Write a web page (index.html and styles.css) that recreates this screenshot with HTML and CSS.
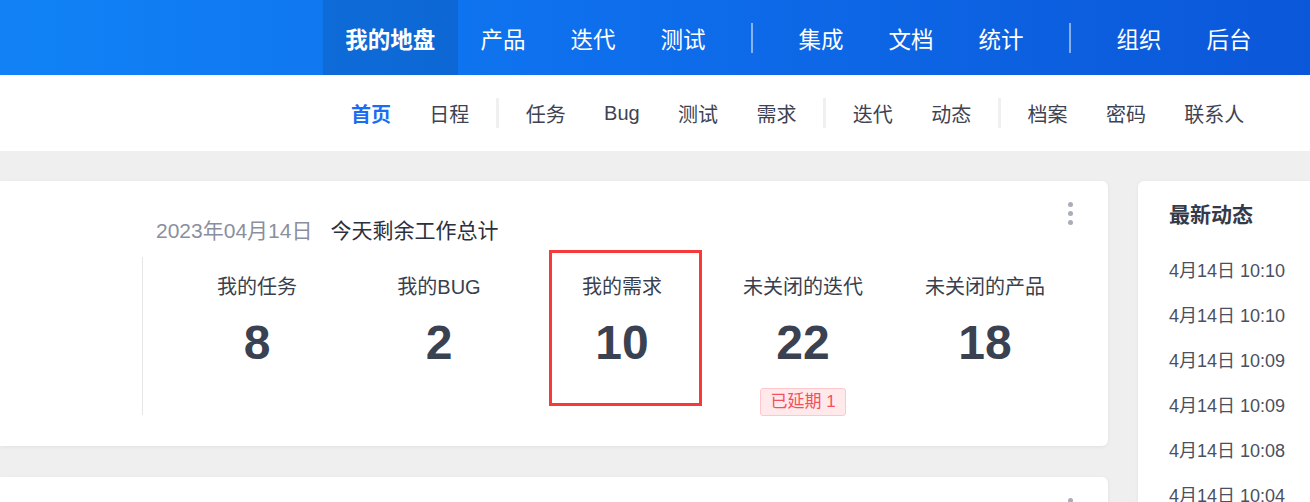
FILE: index.html
```html
<!DOCTYPE html>
<html lang="zh-CN">
<head>
<meta charset="utf-8">
<title>我的地盘</title>
<link rel="stylesheet" href="styles.css">
</head>
<body>
<header class="header">
  <nav class="mainnav">
    <a class="nav-item active">我的地盘</a>
    <a class="nav-item">产品</a>
    <a class="nav-item">迭代</a>
    <a class="nav-item">测试</a>
    <span class="nav-sep"></span>
    <a class="nav-item">集成</a>
    <a class="nav-item">文档</a>
    <a class="nav-item">统计</a>
    <span class="nav-sep"></span>
    <a class="nav-item">组织</a>
    <a class="nav-item">后台</a>
  </nav>
</header>
<div class="subbar">
  <nav class="subnav">
    <a class="sub-item active">首页</a>
    <a class="sub-item">日程</a>
    <span class="sub-sep"></span>
    <a class="sub-item">任务</a>
    <a class="sub-item">Bug</a>
    <a class="sub-item">测试</a>
    <a class="sub-item">需求</a>
    <span class="sub-sep"></span>
    <a class="sub-item">迭代</a>
    <a class="sub-item">动态</a>
    <span class="sub-sep"></span>
    <a class="sub-item">档案</a>
    <a class="sub-item">密码</a>
    <a class="sub-item">联系人</a>
  </nav>
</div>
<main class="main">
  <div class="left-col">
    <section class="card summary">
      <div class="summary-head">
        <span class="date">2023年04月14日</span>
        <span class="title">今天剩余工作总计</span>
      </div>
      <div class="stats">
        <div class="stat-col"><div class="stat"><div class="stat-label">我的任务</div><div class="stat-num">8</div></div></div>
        <div class="stat-col"><div class="stat"><div class="stat-label">我的BUG</div><div class="stat-num">2</div></div></div>
        <div class="stat-col"><div class="stat highlight"><div class="stat-label">我的需求</div><div class="stat-num">10</div></div></div>
        <div class="stat-col"><div class="stat"><div class="stat-label">未关闭的迭代</div><div class="stat-num">22</div><span class="badge">已延期 1</span></div></div>
        <div class="stat-col"><div class="stat"><div class="stat-label">未关闭的产品</div><div class="stat-num">18</div></div></div>
      </div>
      <div class="more"><i></i><i></i><i></i></div>
    </section>
    <section class="card second">
      <div class="more"><i></i><i></i><i></i></div>
    </section>
  </div>
  <aside class="card feed">
    <h2 class="feed-title">最新动态</h2>
    <ul class="feed-list">
      <li>4月14日 10:10</li>
      <li>4月14日 10:10</li>
      <li>4月14日 10:09</li>
      <li>4月14日 10:09</li>
      <li>4月14日 10:08</li>
      <li>4月14日 10:04</li>
    </ul>
  </aside>
</main>
</body>
</html>
```
FILE: styles.css
```css
* { box-sizing: border-box; }
html, body { margin: 0; padding: 0; }
body {
  width: 1310px;
  height: 502px;
  overflow: hidden;
  background: #efefef;
  font-family: "Liberation Sans", "Noto Sans CJK SC", sans-serif;
  color: #3c4353;
}
a { text-decoration: none; color: inherit; }

.header {
  height: 75px;
  background: linear-gradient(90deg, #1182f6 0%, #0e6fec 45%, #0b57d9 100%);
  display: flex;
  justify-content: flex-end;
  padding-right: 36px;
}
.mainnav { display: flex; align-items: stretch; }
.nav-item {
  display: flex;
  align-items: center;
  padding: 0 22.5px;
  font-size: 22.5px;
  color: #fff;
}
.nav-item.active { background: rgba(0, 0, 0, 0.1); font-weight: 700; }
.nav-sep {
  align-self: center;
  width: 2px;
  height: 30px;
  background: rgba(255, 255, 255, 0.5);
  margin: 0 23px;
}

.subbar {
  height: 76px;
  background: #fff;
  display: flex;
  justify-content: flex-end;
  padding-right: 46.5px;
}
.subnav { display: flex; align-items: center; }
.sub-item {
  padding: 0 19.2px;
  font-size: 20px;
  color: #3d4353;
}
.sub-item.active { color: #1a6cf2; font-weight: 700; }
.sub-sep {
  width: 3px;
  height: 30px;
  background: #f0f0f0;
  margin: 0 7.5px;
}

.main {
  display: flex;
  gap: 30px;
  padding-top: 30px;
}
.left-col {
  width: 1108px;
  display: flex;
  flex-direction: column;
  gap: 31px;
}
.card {
  background: #fff;
  border-radius: 6px;
  box-shadow: 0 1px 4px rgba(0, 0, 0, 0.06);
  position: relative;
}
.summary {
  border-radius: 0 6px 6px 0;
  height: 265px;
  padding: 36px 0 0 142px;
}
.second { border-radius: 0 6px 6px 0; height: 120px; }

.summary-head {
  padding-left: 14px;
  height: 28px;
  line-height: 28px;
  font-size: 21px;
  display: flex;
  gap: 18px;
}
.date { color: #8a8f9e; }
.title { color: #2b303d; }

.stats {
  margin-top: 12px;
  height: 158px;
  border-left: 1px solid #e6e6e6;
  padding-left: 23px;
  display: grid;
  grid-template-columns: repeat(5, 182px);
}
.stat-col { display: flex; justify-content: center; }
.stat {
  width: 153px;
  height: 156px;
  margin-top: -7px;
  border: 3px solid transparent;
  display: flex;
  flex-direction: column;
  align-items: center;
  padding-top: 21px;
}
.stat.highlight { border-color: #f63a3a; margin-left: 9px; padding-right: 7px; }
.stat-label {
  font-size: 20px;
  line-height: 26px;
  color: #3a3f4d;
}
.stat-num {
  margin-top: 15px;
  font-size: 48px;
  line-height: 56px;
  font-weight: 700;
  color: #3a4150;
}
.badge {
  margin-top: 17px;
  height: 28px;
  line-height: 26px;
  padding: 0 9px;
  border: 1px solid #ffc6cc;
  background: #ffe9eb;
  border-radius: 3px;
  font-size: 17px;
  color: #f4505c;
  white-space: nowrap;
}

.more {
  position: absolute;
  top: 21px;
  right: 35px;
  display: flex;
  flex-direction: column;
  gap: 4px;
}
.more i {
  display: block;
  width: 5px;
  height: 5px;
  border-radius: 50%;
  background: #a9acb9;
}

.feed {
  flex: 1;
  height: 360px;
  border-radius: 6px 0 0 0;
  padding: 20px 0 0 31px;
}
.feed-title {
  margin: 0;
  font-size: 21px;
  line-height: 28px;
  font-weight: 700;
  color: #353a48;
}
.feed-list {
  list-style: none;
  margin: 20px 0 0;
  padding: 0;
}
.feed-list li {
  height: 45px;
  line-height: 45px;
  font-size: 18px;
  color: #4a5060;
  white-space: nowrap;
}
```
